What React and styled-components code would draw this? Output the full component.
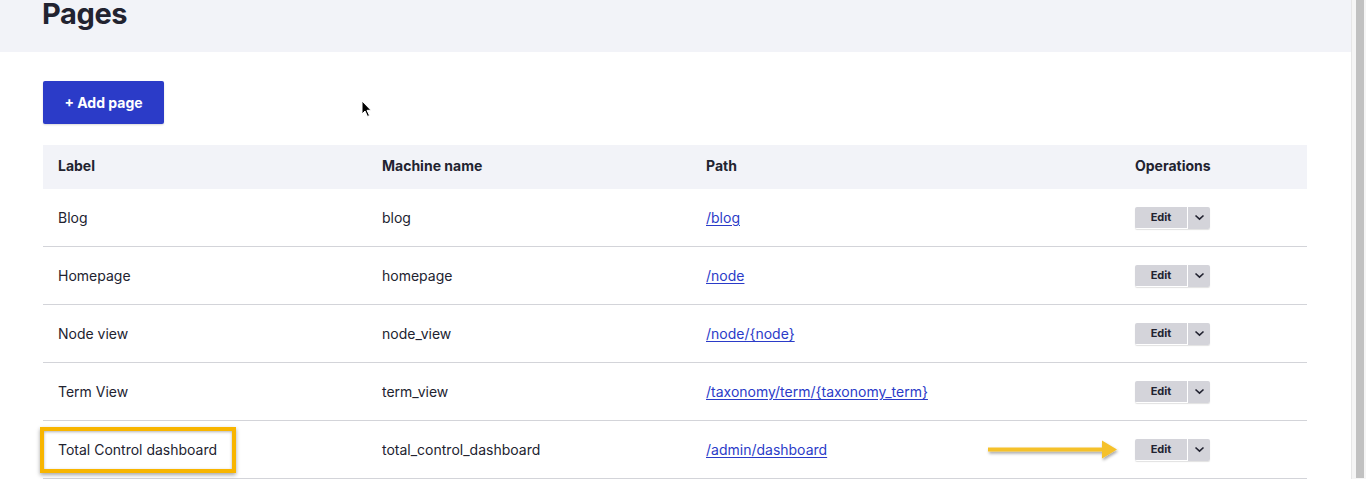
import React from 'react';
import styled, { createGlobalStyle } from 'styled-components';

const GlobalStyle = createGlobalStyle`
    html, body {
        margin: 0;
        padding: 0;
        height: 479px;
        overflow: hidden;
        background: #ffffff;
    }
    body {
        font-family: Inter, "Noto Sans", Arial, sans-serif;
        color: #222330;
        font-size: 14px;
    }
`;

const rows = [
    { label: 'Blog', machine: 'blog', path: '/blog' },
    { label: 'Homepage', machine: 'homepage', path: '/node' },
    { label: 'Node view', machine: 'node_view', path: '/node/{node}' },
    { label: 'Term View', machine: 'term_view', path: '/taxonomy/term/{taxonomy_term}' },
    { label: 'Total Control dashboard', machine: 'total_control_dashboard', path: '/admin/dashboard', marked: true },
];

const Screen = styled.div`
    display: flex;
    width: 1366px;
    height: 479px;
    overflow: hidden;
`;
const Page = styled.div`
    flex: 1;
    min-width: 0;
`;
const Scrollbar = styled.div`
    width: 14px;
    border-left: 1px solid #e6e6e6;
    background: #f5f5f5;
    display: flex;
    justify-content: center;
`;
const Thumb = styled.div`
    width: 8px;
    margin-left: 2px;
    background: #c1c1c1;
    height: 478px;
`;
const Header = styled.header`
    height: 52px;
    background: #f2f3f8;
    padding-left: 42px;
`;
const Title = styled.h1`
    margin: 0;
    font-size: 29px;
    line-height: 28px;
    font-weight: 700;
    letter-spacing: -0.4px;
    color: #222330;
`;
const Content = styled.main`
    padding: 29px 44px 0 43px;
    position: relative;
`;
const Toolbar = styled.div`
    height: 64px;
    position: relative;
`;
const PrimaryButton = styled.button`
    height: 43px;
    width: 121px;
    border: 0;
    border-radius: 2px;
    background: #2b3bc8;
    color: #fff;
    font-family: inherit;
    font-size: 14px;
    font-weight: 700;
    box-shadow: 0 1px 2px rgba(0, 0, 0, 0.15);
`;
const Cursor = styled.svg`
    position: absolute;
    left: 318px;
    top: 19px;
`;
const Row = styled.div`
    display: grid;
    grid-template-columns: 324px 324px 429px 1fr;
    align-items: center;
    height: ${p => (p.$head ? '44px' : '57px')};
    background: ${p => (p.$head ? '#f2f3f8' : '#fff')};
    border-bottom: ${p => (p.$head ? '0' : '1px solid #d3d4d9')};
`;
const Cell = styled.div`
    padding: ${p => (p.$head ? '0 15px 3px' : '0 15px')};
    position: relative;
    font-weight: ${p => (p.$head ? 700 : 400)};
    white-space: nowrap;
`;
const PathLink = styled.a`
    color: #2b3bc8;
    text-decoration: underline;
    text-underline-offset: 2px;
`;
const Highlight = styled.div`
    position: absolute;
    left: -3px;
    top: calc(50% - 23px);
    width: 196px;
    height: 46px;
    box-sizing: border-box;
    border: 4px solid #f8b500;
    box-shadow: 0 2px 4px rgba(0, 0, 0, 0.35), inset 0 1px 3px rgba(0, 0, 0, 0.3);
    pointer-events: none;
`;
const Arrow = styled.svg`
    position: absolute;
    left: -134px;
    top: calc(50% - 13px);
    overflow: visible;
`;
const SplitButton = styled.div`
    display: inline-flex;
    height: 22px;
    border-radius: 2px;
    overflow: hidden;
    box-shadow: 0 1px 1px rgba(0, 0, 0, 0.12);
    vertical-align: middle;
`;
const EditPart = styled.span`
    width: 52px;
    display: flex;
    align-items: center;
    justify-content: center;
    background: #d4d4da;
    border-bottom: 1px solid #fff;
    box-sizing: border-box;
    font-size: 11px;
    font-weight: 700;
    color: #222330;
`;
const Toggle = styled.span`
    width: 22px;
    margin-left: 1px;
    display: flex;
    align-items: center;
    justify-content: center;
    background: #d4d4da;
`;

const Operations = ({ marked }) => (
    <Cell>
        {marked && (
            <Arrow width="140" height="24" viewBox="0 0 140 24">
                <defs>
                    <filter id="sh" x="-10%" y="-50%" width="120%" height="200%">
                        <feDropShadow dx="1" dy="2" stdDeviation="1.5" floodOpacity="0.35" />
                    </filter>
                </defs>
                <g filter="url(#sh)">
                    <path d="M2 10.5 L118 10.5 L118 14.5 L2 14.5 Z" fill="#f5c12a" />
                    <path d="M116 3.5 L131 12.5 L116 21.5 Z" fill="#f5c12a" />
                </g>
            </Arrow>
        )}
        <SplitButton>
            <EditPart>Edit</EditPart>
            <Toggle>
                <svg width="11" height="7" viewBox="0 0 11 7">
                    <path d="M1.5 1.5 L5.5 5.2 L9.5 1.5" fill="none" stroke="#222330" strokeWidth="1.6" />
                </svg>
            </Toggle>
        </SplitButton>
    </Cell>
);

const App = () => (
    <Screen>
        <GlobalStyle />
        <Page>
            <Header>
                <Title>Pages</Title>
            </Header>
            <Content>
                <Toolbar>
                    <PrimaryButton>+ Add page</PrimaryButton>
                    <Cursor width="12" height="18" viewBox="0 0 12 18">
                        <path d="M1 1 L1 14 L4 11 L6.5 16.5 L8.5 15.5 L6 10.3 L10 10.3 Z" fill="#000" stroke="#fff" strokeWidth="1" />
                    </Cursor>
                </Toolbar>
                <Row $head>
                    <Cell $head>Label</Cell>
                    <Cell $head>Machine name</Cell>
                    <Cell $head>Path</Cell>
                    <Cell $head>Operations</Cell>
                </Row>
                {rows.map(r => (
                    <Row key={r.machine}>
                        <Cell>
                            {r.marked && <Highlight />}
                            {r.label}
                        </Cell>
                        <Cell>{r.machine}</Cell>
                        <Cell>
                            <PathLink href="#">{r.path}</PathLink>
                        </Cell>
                        <Operations marked={r.marked} />
                    </Row>
                ))}
            </Content>
        </Page>
        <Scrollbar>
            <Thumb />
        </Scrollbar>
    </Screen>
);

export default App;
